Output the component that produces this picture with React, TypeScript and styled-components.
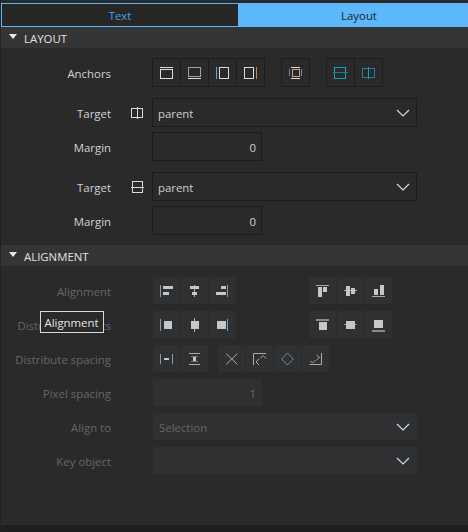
import React from "react";
import styled, { createGlobalStyle } from "styled-components";

const Global = createGlobalStyle`
  html, body { margin: 0; padding: 0; background: #2a2a2a; }
  * { box-sizing: border-box; }
`;

const Page = styled.div`
  position: relative;
  width: 468px;
  height: 532px;
  overflow: hidden;
  display: flex;
  flex-direction: column;
  background: #2a2a2a;
  font-family: "Open Sans", "Noto Sans", sans-serif;
  font-size: 11.4px;
  color: #dcdcdc;
  border-left: 1px solid #222;
`;

const Tabs = styled.div`
  display: flex;
  height: 24px;
  margin-top: 3px;
  flex: none;
`;

const Tab = styled.div<{ $active?: boolean }>`
  display: flex;
  align-items: center;
  justify-content: center;
  width: ${(p) => (p.$active ? "229px" : "238px")};
  padding: 1px 0 0 ${(p) => (p.$active ? "11px" : "0")};
  background: ${(p) => (p.$active ? "#5cb8fa" : "#262626")};
  border: 1px solid #5cb8fa;
  color: ${(p) => (p.$active ? "#1f1f1f" : "#46a2e6")};
`;

const SectionHeader = styled.div<{ $top: number }>`
  display: flex;
  align-items: center;
  gap: 7px;
  height: 21px;
  margin-top: ${(p) => p.$top}px;
  padding: 1px 0 0 8px;
  background: #353535;
  color: #e0e0e0;
  flex: none;
`;

const Caret = styled.span`
  width: 0;
  height: 0;
  border-left: 4px solid transparent;
  border-right: 4px solid transparent;
  border-top: 5px solid #e8e8e8;
  margin-top: -3px;
`;

const Row = styled.div<{ $top: number; $h?: number }>`
  display: flex;
  align-items: center;
  flex: none;
  height: ${(p) => p.$h ?? 29}px;
  margin-top: ${(p) => p.$top}px;
`;

const Label = styled.div<{ $dim?: boolean }>`
  width: 110px;
  padding-top: 1px;
  text-align: right;
  flex: none;
  white-space: nowrap;
  color: ${(p) => (p.$dim ? "#666" : "#d2d2d2")};
`;

const Slot = styled.div`
  width: 41px;
  flex: none;
  display: flex;
  justify-content: flex-start;
  padding-left: 18px;
`;

const Group = styled.div<{ $left?: number }>`
  display: flex;
  margin-left: ${(p) => p.$left ?? 0}px;
`;

const AnchorBtn = styled.div`
  width: 29px;
  height: 29px;
  margin-right: -1px;
  display: flex;
  align-items: center;
  justify-content: center;
  border: 1px solid #1d1d1d;
  &:last-child { margin-right: 0; }
`;

const DimBtn = styled.div`
  width: 27px;
  height: 27px;
  margin-right: 1px;
  display: flex;
  align-items: center;
  justify-content: center;
  background: #2f3032;
  &:last-child { margin-right: 0; }
`;

const Combo = styled.div<{ $dim?: boolean }>`
  width: ${(p) => (p.$dim ? 264 : 265)}px;
  height: ${(p) => (p.$dim ? 27 : 29)}px;
  display: flex;
  align-items: center;
  justify-content: space-between;
  padding: 1px 6px 0 5px;
  background: ${(p) => (p.$dim ? "#2f3032" : "transparent")};
  border: 1px solid ${(p) => (p.$dim ? "#2f3032" : "#1d1d1d")};
  color: ${(p) => (p.$dim ? "#666" : "#cfcfcf")};
`;

const Field = styled.div<{ $dim?: boolean }>`
  width: ${(p) => (p.$dim ? 109 : 110)}px;
  height: ${(p) => (p.$dim ? 27 : 29)}px;
  display: flex;
  align-items: center;
  justify-content: flex-end;
  padding: 1px 5px 0 0;
  background: ${(p) => (p.$dim ? "#2f3032" : "transparent")};
  border: 1px solid ${(p) => (p.$dim ? "#2f3032" : "#1d1d1d")};
  color: ${(p) => (p.$dim ? "#666" : "#cfcfcf")};
`;

const Spacer = styled.div`
  flex: 1;
`;

const Footer = styled.div`
  height: 7px;
  flex: none;
  background: #1f1f1f;
`;

const Tooltip = styled.div`
  position: absolute;
  left: 39px;
  top: 311px;
  width: 64px;
  height: 22px;
  display: flex;
  align-items: center;
  justify-content: center;
  padding: 1px 1px 0 0;
  background: #2a2a2a;
  border: 1px solid #d8d8d8;
  color: #e4e4e4;
`;

const Svg = styled.svg<{ $smooth?: boolean }>`
  display: block;
  flex: none;
  shape-rendering: ${(p) => (p.$smooth ? "geometricPrecision" : "crispEdges")};
`;

const Chevron = styled.svg`
  display: block;
  flex: none;
`;

type IconProps = { children: React.ReactNode; stroke?: string; smooth?: boolean };
const Icon = ({ children, stroke = "#dadada", smooth }: IconProps) => (
  <Svg width="17" height="17" viewBox="0 0 17 17" fill="none" stroke={stroke} $smooth={smooth}>
    {children}
  </Svg>
);

const Down = () => (
  <Chevron width="14" height="8" viewBox="0 0 14 8" fill="none" stroke="#d4dbe2" strokeWidth="1.2">
    <path d="M1 1l6 6 6-6" />
  </Chevron>
);

const DIM = "#a9abad";
const Block = ({ x, y, w, h }: { x: number; y: number; w: number; h: number }) => (
  <rect x={x} y={y} width={w} height={h} fill="#c6c7c8" stroke="none" />
);

const alignH = [
  <><path d="M2.5 3v12" stroke="#7f9fb5" /><Block x={5} y={4} w={10} h={3} /><Block x={5} y={10} w={6} h={3} /></>,
  <><path d="M8.5 3v12" /><Block x={4} y={4} w={9} h={3} /><Block x={6} y={10} w={5} h={3} /></>,
  <><path d="M13.5 3v12" stroke="#b09070" /><Block x={7} y={4} w={5} h={3} /><Block x={2} y={10} w={10} h={3} /></>,
];
const alignV = [
  <><path d="M2 3.5h13" /><Block x={4} y={5} w={4} h={10} /><Block x={9} y={5} w={4} h={5} /></>,
  <><path d="M2 8.5h13" /><Block x={4} y={4} w={4} h={10} /><Block x={9} y={6} w={4} h={6} /></>,
  <><path d="M2 14.5h13" /><Block x={4} y={7} w={4} h={6} /><Block x={10} y={3} w={4} h={10} /></>,
];
const distH = [
  <><path d="M2.5 3v12" stroke="#7f9fb5" /><Block x={6} y={5} w={8} h={8} /></>,
  <><path d="M8.5 2v14" /><Block x={5} y={5} w={8} h={8} /></>,
  <><path d="M13.5 3v12" stroke="#7f9fb5" /><Block x={3} y={5} w={9} h={8} /></>,
];
const distV = [
  <><path d="M2 3.5h13" strokeWidth="2" stroke="#8a8a8a" /><Block x={5} y={6} w={8} h={8} /></>,
  <><path d="M2 8.5h13" stroke="#8a8a8a" /><Block x={4} y={5} w={9} h={8} /></>,
  <><path d="M2 14.5h13" strokeWidth="2" stroke="#8a8a8a" /><Block x={4} y={4} w={9} h={8} /></>,
];
const spacingA = [
  <><path d="M2.5 4v10M14.5 4v10" stroke="#7f9fb5" /><Block x={6} y={8} w={5} h={2} /></>,
  <><path d="M3 3.5h11M3 14.5h11" /><Block x={7} y={6} w={3} h={6} /><path d="M5 6.5h7M5 11.5h7" stroke="#777" /></>,
];
const spacingB: { el: React.ReactNode; stroke?: string }[] = [
  { el: <path d="M3 3.5l11.5 11M14.5 3.5L3 14.5" /> },
  { el: <path d="M2.5 15V3.5H15M9 8.5l3-3 3 3M8 9l-3 3 3 3" /> },
  { el: <path d="M8.5 3l5.8 6-5.8 6-5.8-6z" strokeDasharray="2 .7" />, stroke: "#8fa6b5" },
  { el: <path d="M2.5 14.5H14.5V3M3.5 11l2 2 3-3M9.5 5l3 2.5-3 2.5" /> },
];

export default function App() {
  return (
    <Page>
      <Global />
      <Tabs>
        <Tab>Text</Tab>
        <Tab $active>Layout</Tab>
      </Tabs>
      <SectionHeader $top={0}><Caret />LAYOUT</SectionHeader>

      <Row $top={10}>
        <Label>Anchors</Label>
        <Slot />
        <Group>
          <AnchorBtn><Icon><path d="M2 3.5h13" /><rect x="2.5" y="5.5" width="12" height="9" /></Icon></AnchorBtn>
          <AnchorBtn><Icon><path d="M2 14.5h13" /><rect x="2.5" y="3.5" width="12" height="9" stroke="#a0a0a0" /></Icon></AnchorBtn>
          <AnchorBtn><Icon><path d="M2.5 3v12" stroke="#6fa4d0" /><rect x="5.5" y="3.5" width="9" height="11" /></Icon></AnchorBtn>
          <AnchorBtn><Icon><path d="M14.5 3v12" stroke="#c08a50" /><rect x="2.5" y="3.5" width="9" height="11" /></Icon></AnchorBtn>
        </Group>
        <Group $left={16}>
          <AnchorBtn><Icon><path d="M4 3.5h9M4 14.5h9" /><path d="M2.5 5v7M14.5 5v7" stroke="#5f8fb8" /><rect x="5.5" y="5.5" width="7" height="7" stroke="#c9a070" /></Icon></AnchorBtn>
        </Group>
        <Group $left={16}>
          <AnchorBtn><Icon stroke="#1b9dba"><rect x="2.5" y="3.5" width="11" height="11" /><path d="M1 8.5h15" stroke="#157f99" /></Icon></AnchorBtn>
          <AnchorBtn><Icon stroke="#1c7fa6"><rect x="2.5" y="4.5" width="12" height="9" /><path d="M8.5 3v12" stroke="#169fb4" /></Icon></AnchorBtn>
        </Group>
      </Row>

      <Row $top={11}>
        <Label>Target</Label>
        <Slot><Icon><rect x="2.5" y="4.5" width="11" height="9" /><path d="M8.5 3v12" /></Icon></Slot>
        <Combo>parent<Down /></Combo>
      </Row>
      <Row $top={5}>
        <Label>Margin</Label>
        <Slot />
        <Field>0</Field>
      </Row>
      <Row $top={11}>
        <Label>Target</Label>
        <Slot><Icon><rect x="3.5" y="3.5" width="10" height="11" /><path d="M2 9.5h13" /></Icon></Slot>
        <Combo>parent<Down /></Combo>
      </Row>
      <Row $top={5}>
        <Label>Margin</Label>
        <Slot />
        <Field>0</Field>
      </Row>

      <SectionHeader $top={10}><Caret />ALIGNMENT</SectionHeader>

      <Row $top={11} $h={27}>
        <Label $dim>Alignment</Label>
        <Slot />
        <Group $left={1}>{alignH.map((c, i) => <DimBtn key={i}><Icon stroke={DIM}>{c}</Icon></DimBtn>)}</Group>
        <Group $left={73}>{alignV.map((c, i) => <DimBtn key={i}><Icon stroke={DIM}>{c}</Icon></DimBtn>)}</Group>
      </Row>
      <Row $top={7} $h={27}>
        <Label $dim>Distribute objects</Label>
        <Slot />
        <Group $left={1}>{distH.map((c, i) => <DimBtn key={i}><Icon stroke={DIM}>{c}</Icon></DimBtn>)}</Group>
        <Group $left={73}>{distV.map((c, i) => <DimBtn key={i}><Icon stroke={DIM}>{c}</Icon></DimBtn>)}</Group>
      </Row>
      <Row $top={7} $h={27}>
        <Label $dim>Distribute spacing</Label>
        <Slot />
        <Group $left={1}>{spacingA.map((c, i) => <DimBtn key={i}><Icon stroke={DIM}>{c}</Icon></DimBtn>)}</Group>
        <Group $left={10}>{spacingB.map((c, i) => <DimBtn key={i}><Icon stroke={c.stroke ?? DIM} smooth>{c.el}</Icon></DimBtn>)}</Group>
      </Row>
      <Row $top={7} $h={27}>
        <Label $dim>Pixel spacing</Label>
        <Slot />
        <Group $left={1}><Field $dim>1</Field></Group>
      </Row>
      <Row $top={7} $h={27}>
        <Label $dim>Align to</Label>
        <Slot />
        <Group $left={1}><Combo $dim>Selection<Down /></Combo></Group>
      </Row>
      <Row $top={7} $h={27}>
        <Label $dim>Key object</Label>
        <Slot />
        <Group $left={1}><Combo $dim><span /><Down /></Combo></Group>
      </Row>
      <Spacer />
      <Footer />
      <Tooltip>Alignment</Tooltip>
    </Page>
  );
}
